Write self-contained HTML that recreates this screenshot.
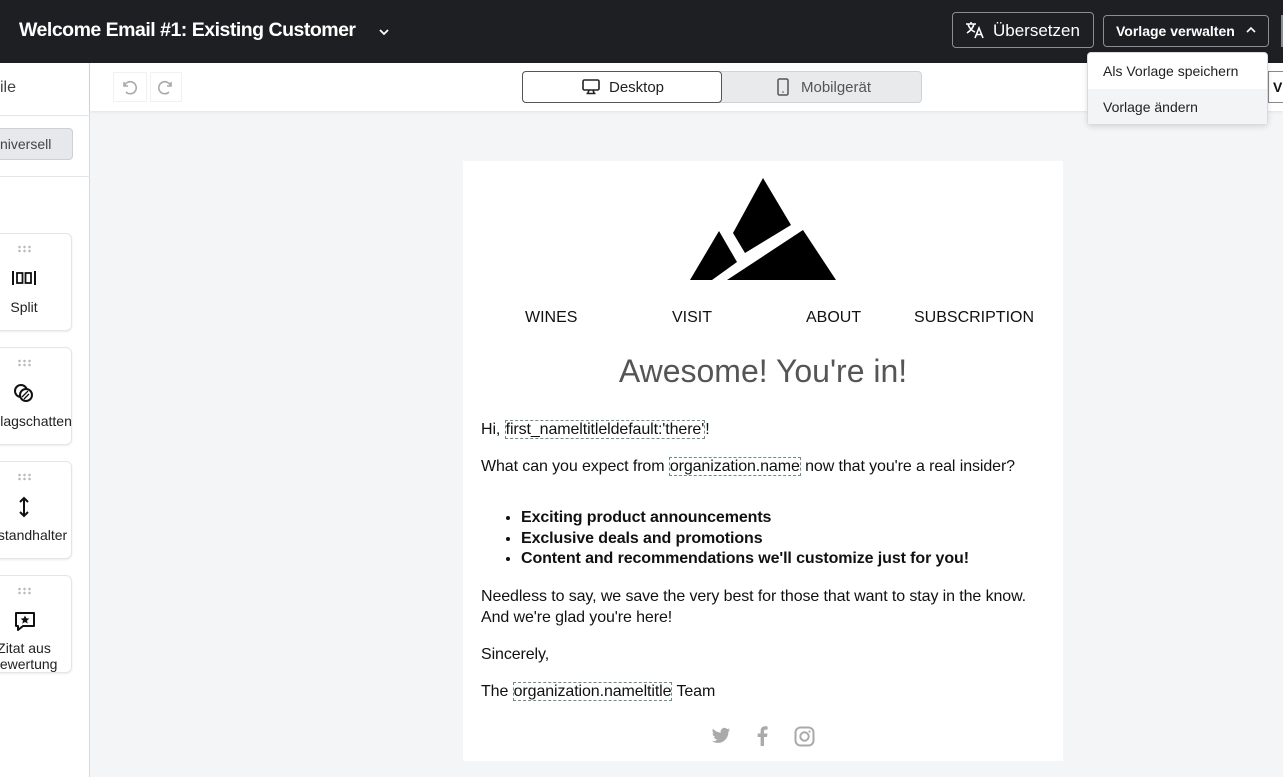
<!DOCTYPE html>
<html><head><meta charset="utf-8"><style>
*{box-sizing:border-box;margin:0;padding:0}
body{width:1283px;height:777px;overflow:hidden;position:relative;background:#f4f5f6;font-family:"Liberation Sans",sans-serif;color:#111}
.a{position:absolute}
.top{left:0;top:0;width:1283px;height:63px;background:#1d1f22}
.title{left:19px;top:19px;color:#fff;font-size:19.5px;font-weight:bold;letter-spacing:-0.5px}
.btn{border:1px solid #8a8d91;border-radius:4px;color:#fff;font-size:16px}
.side{left:0;top:63px;width:90px;height:714px;background:#fff;border-right:1px solid #d6d8db}
.card{left:-10px;width:82px;background:#fff;border:1px solid #e3e5e8;border-radius:6px;box-shadow:0 1px 2px rgba(0,0,0,.08);font-size:14px;color:#222}
.lbl{position:absolute;left:-57px;width:180px;text-align:center}
.dots{position:absolute;left:26px;top:11px;width:14px;height:8px;background-image:radial-gradient(circle,#b8bbbf 1.2px,transparent 1.4px);background-size:5px 4px}
.tb{left:90px;top:63px;width:1193px;height:48px;background:#fff;box-shadow:0 1px 3px rgba(0,0,0,.08)}
.email{left:463px;top:161px;width:600px;height:600px;background:#fff;font-size:16px}
.ph{border:1px dashed #6f8a8a;padding:0}
.menu{left:1087px;top:52px;width:181px;height:73px;background:#fff;border:1px solid #d8dadd;border-radius:4px;box-shadow:0 2px 6px rgba(0,0,0,.12);font-size:14px;color:#222}
</style></head><body>
<div class="a top"></div>
<div class="a title">Welcome Email #1: Existing Customer</div>
<svg class="a" style="left:377px;top:27px" width="14" height="10" viewBox="0 0 14 10"><path d="M3 3l4 4 4-4" fill="none" stroke="#fff" stroke-width="1.8"/></svg>
<div class="a btn" style="left:952px;top:12px;width:142px;height:36px"></div>
<svg class="a" style="left:965px;top:21px" width="20" height="18" viewBox="0 0 20 18"><path d="M1 3h10M6 1v2M3 3c1 4 4 7 7 8M9 3c-1 4-4 7-7 9" fill="none" stroke="#fff" stroke-width="1.6"/><path d="M10 17l4-10 4 10M11.5 13.5h5" fill="none" stroke="#fff" stroke-width="1.6"/></svg>
<div class="a" style="left:993px;top:21px;color:#fff;font-size:17px">Übersetzen</div>
<div class="a btn" style="left:1103px;top:15px;width:166px;height:32px"></div>
<div class="a" style="left:1116px;top:23px;color:#fff;font-size:14px;font-weight:bold">Vorlage verwalten</div>
<svg class="a" style="left:1245px;top:26px" width="12" height="8" viewBox="0 0 12 8"><path d="M2 6l4-4 4 4" fill="none" stroke="#fff" stroke-width="1.6"/></svg>
<div class="a" style="left:1281px;top:15px;width:2px;height:32px;background:#8a8d91"></div>

<div class="a side"></div>
<div class="a" style="left:0;top:79px;font-size:16px;color:#444">ile</div>
<div class="a" style="left:0;top:115px;width:90px;height:1px;background:#e3e5e8"></div>
<div class="a" style="left:-10px;top:128px;width:83px;height:32px;background:#e6e8eb;border:1px solid #cdd0d4;border-radius:4px;font-size:14px;color:#444;padding:7px 0 0 9px">niversell</div>
<div class="a" style="left:0;top:176px;width:90px;height:1px;background:#e3e5e8"></div>

<div class="a card" style="top:233px;height:98px"><div class="dots"></div>
<svg style="position:absolute;left:21px;top:36px" width="24" height="16" viewBox="0 0 24 16"><path d="M1 1v14M23 1v14" stroke="#111" stroke-width="2"/><rect x="5" y="3" width="5.5" height="10" fill="none" stroke="#111" stroke-width="1.8"/><rect x="13.5" y="3" width="5.5" height="10" fill="none" stroke="#111" stroke-width="1.8"/></svg>
<div class="lbl" style="top:65px">Split</div></div>
<div class="a card" style="top:347px;height:98px"><div class="dots"></div>
<svg style="position:absolute;left:22px;top:35px" width="22" height="20" viewBox="0 0 22 20"><circle cx="8" cy="8" r="6" fill="none" stroke="#111" stroke-width="2"/><circle cx="13" cy="12" r="6" fill="#fff" stroke="#111" stroke-width="2"/><path d="M9 14l6-6M11 16l5-5" stroke="#111" stroke-width="1.3"/></svg>
<div class="lbl" style="top:65px">Schlagschatten</div></div>
<div class="a card" style="top:461px;height:98px"><div class="dots"></div>
<svg style="position:absolute;left:26px;top:34px" width="14" height="22" viewBox="0 0 14 22"><path d="M7 2v18M3 6l4-4 4 4M3 16l4 4 4-4" fill="none" stroke="#111" stroke-width="2"/></svg>
<div class="lbl" style="top:65px">Abstandhalter</div></div>
<div class="a card" style="top:575px;height:98px"><div class="dots"></div>
<svg style="position:absolute;left:23px;top:35px" width="22" height="22" viewBox="0 0 22 22"><path d="M2 2h18v13H9l-5 4v-4H2z" fill="none" stroke="#111" stroke-width="2" stroke-linejoin="round"/><path d="M11 4.5l1.3 2.8 3 .3-2.3 2 .7 3-2.7-1.6-2.7 1.6.7-3-2.3-2 3-.3z" fill="#111"/></svg>
<div class="lbl" style="top:64px;line-height:16px">Zitat aus<br>Bewertung</div></div>

<div class="a tb"></div>
<div class="a" style="left:113px;top:72px;width:34px;height:30px;border:1px solid #f0f1f2"></div>
<div class="a" style="left:150px;top:72px;width:32px;height:30px;border:1px solid #f0f1f2"></div>
<svg class="a" style="left:120px;top:78px" width="18" height="18" viewBox="0 0 18 18"><path d="M4 4v4h4M4.5 8A6 6 0 1 1 6 14" fill="none" stroke="#aaa" stroke-width="1.6"/></svg>
<svg class="a" style="left:157px;top:78px" width="18" height="18" viewBox="0 0 18 18"><path d="M14 4v4h-4M13.5 8A6 6 0 1 0 12 14" fill="none" stroke="#aaa" stroke-width="1.6"/></svg>
<div class="a" style="left:522px;top:71px;width:400px;height:32px;background:#e8eaec;border:1px solid #d0d3d6;border-radius:4px"></div>
<div class="a" style="left:522px;top:71px;width:200px;height:32px;background:#fff;border:1px solid #555;border-radius:4px"></div>
<svg class="a" style="left:582px;top:79px" width="18" height="16" viewBox="0 0 18 16"><rect x="1" y="1" width="16" height="10" rx="1.5" fill="none" stroke="#222" stroke-width="1.6"/><path d="M7 11l-1 3M11 11l1 3M4.5 14.5h9" stroke="#222" stroke-width="1.6"/></svg>
<div class="a" style="left:609px;top:79px;font-size:15px;color:#222">Desktop</div>
<svg class="a" style="left:776px;top:78px" width="14" height="18" viewBox="0 0 14 18"><rect x="2" y="1" width="10" height="16" rx="1.5" fill="none" stroke="#555" stroke-width="1.5"/><circle cx="7" cy="14" r=".8" fill="#555"/></svg>
<div class="a" style="left:801px;top:79px;font-size:15px;color:#555">Mobilgerät</div>
<div class="a" style="left:1268px;top:71px;width:15px;height:32px;border:1px solid #888;border-right:0;background:#fff;font-size:14px;font-weight:bold;padding:7px 0 0 4px">V</div>

<div class="a email">
<svg style="position:absolute;left:0;top:0" width="600" height="130"><g transform="translate(-463,-161)"><path d="M763 178L791 225L745 253L733 233Z"/><path d="M719 231L737 262L712 280L690 280Z"/><path d="M803 230L836 280L727 280Z"/></g></svg>
<div style="position:absolute;top:148px;left:0;width:600px;font-size:16px;color:#111">
<span style="position:absolute;left:62px">WINES</span><span style="position:absolute;left:209px">VISIT</span><span style="position:absolute;left:343px">ABOUT</span><span style="position:absolute;left:451px">SUBSCRIPTION</span></div>
<div style="position:absolute;top:192px;width:600px;text-align:center;font-size:32px;color:#555">Awesome! You're in!</div>
<div style="position:absolute;left:18px;top:258px;width:570px;line-height:21px;letter-spacing:-0.1px">
<p>Hi, <span class="ph">first_nameltitleldefault:'there'</span>!</p>
<p style="margin-top:16px">What can you expect from <span class="ph">organization.name</span> now that you're a real insider?</p>
<ul style="margin:31px 0 0 40px;font-weight:bold;line-height:20.5px"><li>Exciting product announcements</li><li>Exclusive deals and promotions</li><li>Content and recommendations we'll customize just for you!</li></ul>
<p style="margin-top:16px">Needless to say, we save the very best for those that want to stay in the know. And we're glad you're here!</p>
<p style="margin-top:16px">Sincerely,</p>
<p style="margin-top:16px">The <span class="ph">organization.nameltitle</span> Team</p>
</div>
<svg style="position:absolute;left:248px;top:566px" width="20" height="18" viewBox="0 0 24 20"><path d="M23 2.5c-.8.4-1.7.6-2.6.7.9-.6 1.6-1.4 2-2.5-.9.5-1.9.9-2.9 1.1A4.5 4.5 0 0 0 11.8 6C8 5.8 4.6 4 2.4 1.2c-1.2 2.1-.6 4.7 1.4 6-.7 0-1.4-.2-2-.6 0 2.2 1.6 4.1 3.7 4.5-.7.2-1.4.2-2 .1.6 1.8 2.3 3.1 4.2 3.1A9 9 0 0 1 1 16.2 12.8 12.8 0 0 0 8 18.3c8.3 0 12.9-7 12.9-13v-.6c.9-.6 1.6-1.4 2.1-2.2z" fill="#aaa"/></svg>
<svg style="position:absolute;left:293px;top:565px" width="12" height="20" viewBox="0 0 12 20"><path d="M8 20v-9h3l.5-3.5H8V5.3c0-1 .3-1.7 1.7-1.7H11.6V.5C11.3.4 10.2.3 9 .3 6.4.3 4.6 1.9 4.6 4.8v2.7H1.6V11h3v9z" fill="#aaa"/></svg>
<svg style="position:absolute;left:331px;top:565px" width="21" height="21" viewBox="0 0 21 21"><rect x="1.5" y="1.5" width="18" height="18" rx="5" fill="none" stroke="#aaa" stroke-width="2"/><circle cx="10.5" cy="10.5" r="4.2" fill="none" stroke="#aaa" stroke-width="2"/><circle cx="15.5" cy="5.5" r="1.1" fill="#aaa"/></svg>
</div>

<div class="a menu">
<div style="position:absolute;left:15px;top:10px">Als Vorlage speichern</div>
<div style="position:absolute;left:0;top:36px;width:179px;height:35px;background:#f2f4f5"></div>
<div style="position:absolute;left:15px;top:46px">Vorlage ändern</div>
</div>
</body></html>
